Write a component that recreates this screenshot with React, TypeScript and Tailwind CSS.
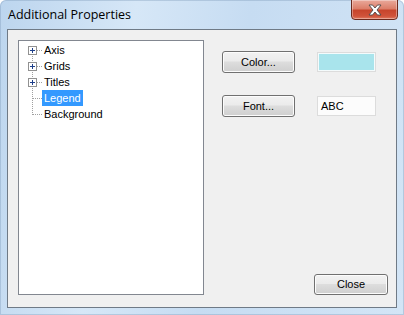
import React from 'react';

const items = [
  { label: 'Axis', expandable: true },
  { label: 'Grids', expandable: true },
  { label: 'Titles', expandable: true },
  { label: 'Legend', expandable: false, selected: true },
  { label: 'Background', expandable: false },
];

function Gutter({ index, count, expandable }: { index: number; count: number; expandable: boolean }) {
  const first = index === 0;
  const last = index === count - 1;
  return (
    <svg width="18" height="16" viewBox="0 0 18 16" className="shrink-0" shapeRendering="crispEdges">
      <line x1="8.5" y1={first ? 8 : 0} x2="8.5" y2={last ? 9 : 16} stroke="#a0a0a0" strokeDasharray="1 1" />
      <line x1={expandable ? 13 : 9} y1="8.5" x2="18" y2="8.5" stroke="#a0a0a0" strokeDasharray="1 1" />
      {expandable && (
        <>
          <rect x="4.5" y="4.5" width="8" height="8" fill="#fff" stroke="#919191" />
          <line x1="6" y1="8.5" x2="11" y2="8.5" stroke="#1e3f8a" />
          <line x1="8.5" y1="6" x2="8.5" y2="11" stroke="#1e3f8a" />
        </>
      )}
    </svg>
  );
}

function WinButton({ children, className = '' }: { children: React.ReactNode; className?: string }) {
  return (
    <button
      className={`flex items-center justify-center rounded-[3px] border border-[#707070] bg-[linear-gradient(#f2f2f2_0%,#ebebeb_45%,#dddddd_50%,#cfcfcf_100%)] text-[11px] text-black shadow-[inset_0_0_0_1px_#fcfcfc] ${className}`}
    >
      {children}
    </button>
  );
}

export default function App() {
  return (
    <div
      className="relative flex h-[315px] w-[404px] flex-col overflow-hidden rounded-t-[6px] bg-[linear-gradient(100deg,#bcd5ee_0%,#d6e7f7_30%,#c6dcf2_55%,#d3e5f6_100%)] shadow-[inset_0_0_0_1px_rgba(120,150,180,0.35)]"
      style={{ fontFamily: '"Liberation Sans", Tahoma, sans-serif' }}
    >
      {/* title bar */}
      <div className="flex h-[29px] shrink-0 items-start">
        <span
          className="ml-[8px] mt-[7px] text-[12.5px] leading-[16px] text-black"
          style={{ fontFamily: '"Open Sans", "Noto Sans", sans-serif' }}
        >
          Additional Properties
        </span>
        <div className="ml-auto mr-[6px] mt-[-1px] flex h-[21px] w-[47px] items-center justify-center rounded-b-[4px] border border-[#6b2a1e] bg-[linear-gradient(#e9a99b_0%,#dc7f6a_45%,#c7452c_55%,#d0533a_85%,#e07a60_100%)] shadow-[inset_0_0_0_1px_rgba(255,255,255,0.35)]">
          <svg width="16" height="12" viewBox="0 0 16 12">
            <path
              d="M2 1h3.5L8 4l2.5-3H14l-4 5 4 5h-3.5L8 8l-2.5 3H2l4-5z"
              fill="#ffffff"
              stroke="#4a4a4a"
              strokeWidth="0.9"
              strokeLinejoin="round"
            />
          </svg>
        </div>
      </div>

      {/* client area */}
      <div className="mx-[7px] mb-[7px] flex flex-1 border border-[#6f7a86] bg-[#f0f0f0]">
        <div className="ml-[10px] mt-[10px] h-[255px] w-[186px] border border-[#828790] bg-white pt-[1px]">
          {items.map((it, i) => (
            <div key={it.label} className="flex h-4 items-center pl-[5px]">
              <Gutter index={i} count={items.length} expandable={it.expandable} />
              <span
                className={`px-[2px] text-[11px] leading-4 ${it.selected ? 'bg-[#3399ff] text-white' : 'text-black'}`}
              >
                {it.label}
              </span>
            </div>
          ))}
        </div>

        <div className="ml-[18px] flex flex-1 flex-col pb-[12px] pr-[8px] pt-[21px]">
          <div className="flex items-center">
            <WinButton className="h-[22px] w-[73px]">Color...</WinButton>
            <div className="ml-[22px] h-[20px] w-[59px] border border-[#dcdcdc] bg-[#a9e4ec] shadow-[inset_0_0_0_1px_#f4fbfc]" />
          </div>
          <div className="mt-[22px] flex items-center">
            <WinButton className="h-[22px] w-[73px]">Font...</WinButton>
            <div className="ml-[22px] flex h-[20px] w-[59px] items-center border border-[#dcdcdc] bg-[#fcfcfc] pl-[3px] text-[11px] text-black">
              ABC
            </div>
          </div>
          <div className="mt-auto flex justify-end">
            <WinButton className="h-[21px] w-[74px]">Close</WinButton>
          </div>
        </div>
      </div>
    </div>
  );
}
